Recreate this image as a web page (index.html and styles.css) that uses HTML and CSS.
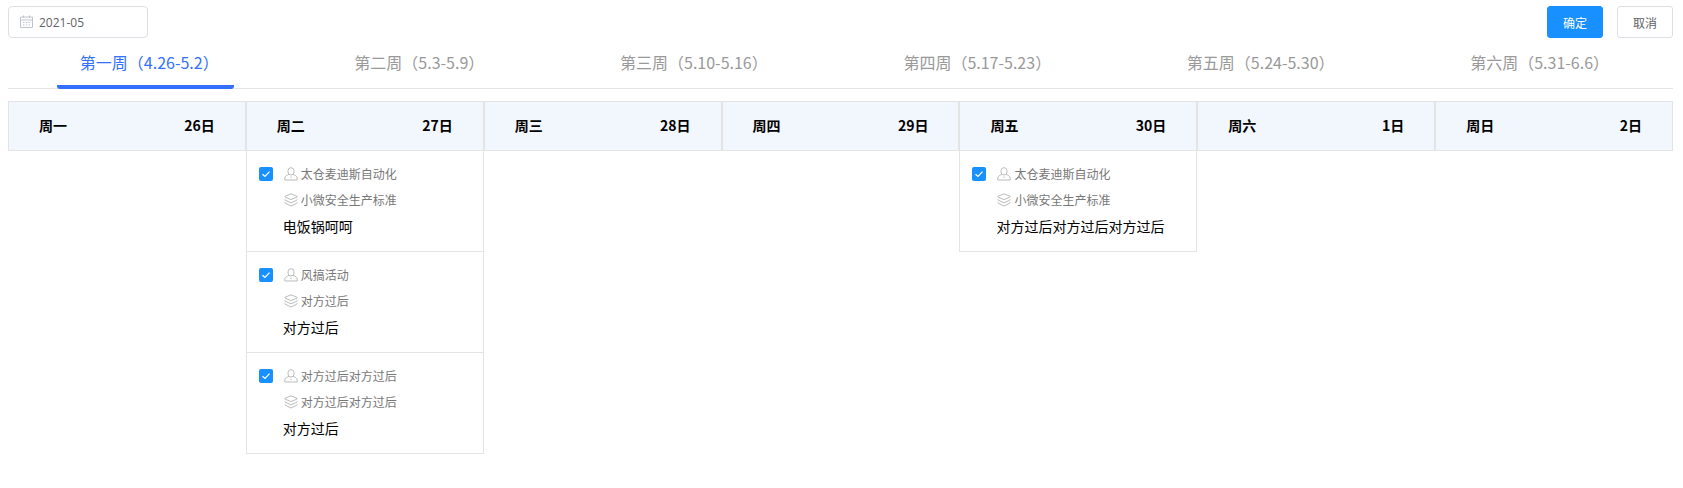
FILE: index.html
```html
<!DOCTYPE html>
<html lang="zh-CN">
<head>
    <meta charset="UTF-8">
    <title>周计划</title>
    <link rel="stylesheet" href="styles.css">
</head>
<body>
    <svg class="icon-defs" width="0" height="0">
        <symbol id="icon-user" viewBox="0 0 14 14">
            <path d="M7 .7a3 3 0 0 1 3 3v1.300a3 3 0 0 1-6 0V3.700a3 3 0 0 1 3-3zM5 7.400C3 8.100.8 9.200.8 11v2h12.400v-2c0-1.800-2.200-2.900-4.200-3.600M7 9.500v1.500" fill="none" stroke="currentColor" stroke-width="1"/>
        </symbol>
        <symbol id="icon-layers" viewBox="0 0 14 14">
            <path d="M7 .8l6 2.500c.4.2.4.600 0 .8L7 6.600 1 4.100c-.4-.2-.4-.6 0-.8zM1.200 6.200c-.5.3-.5.7 0 1L7 9.800l5.800-2.600c.5-.3.5-.7 0-1M1.200 9.200c-.5.3-.5.7 0 1L7 13l5.800-2.800c.5-.3.5-.7 0-1" fill="none" stroke="currentColor" stroke-width="1" stroke-linejoin="round"/>
        </symbol>
    </svg>

    <div class="toolbar">
        <div class="date-box">
            <svg class="date-icon" viewBox="0 0 13 13" width="13" height="13">
                <path d="M.5 2h12v10.500H.5zM.5 5h12M3.500.5V3M9.500.5V3" fill="none" stroke="currentColor"/>
                <path d="M3 7h1.500v1H3zM5.800 7h1.500v1H5.800zM8.600 7h1.500v1H8.600zM3 9.500h1.500v1H3zM5.800 9.500h1.500v1H5.800zM8.600 9.500h1.500v1H8.600z" fill="currentColor"/>
            </svg>
            <span>2021-05</span>
        </div>
        <div class="actions">
            <button class="btn btn-primary">确定</button>
            <button class="btn">取消</button>
        </div>
    </div>

    <div class="tabs">
        <div class="tab active"><span class="tab-label">第一周（4.26-5.2）</span></div>
        <div class="tab"><span class="tab-label">第二周（5.3-5.9）</span></div>
        <div class="tab"><span class="tab-label">第三周（5.10-5.16）</span></div>
        <div class="tab"><span class="tab-label">第四周（5.17-5.23）</span></div>
        <div class="tab"><span class="tab-label">第五周（5.24-5.30）</span></div>
        <div class="tab"><span class="tab-label">第六周（5.31-6.6）</span></div>
    </div>

    <div class="week">
        <div class="day-head"><span>周一</span><span>26日</span></div>
        <div class="day-head"><span>周二</span><span>27日</span></div>
        <div class="day-head"><span>周三</span><span>28日</span></div>
        <div class="day-head"><span>周四</span><span>29日</span></div>
        <div class="day-head"><span>周五</span><span>30日</span></div>
        <div class="day-head"><span>周六</span><span>1日</span></div>
        <div class="day-head"><span>周日</span><span>2日</span></div>

        <div class="day"></div>
        <div class="day">
            <div class="card">
                <div class="row">
                    <span class="check"><svg viewBox="0 0 14 14"><path d="M3.500 7.200l2.500 2.300 4.500-4.800" fill="none" stroke="#fff" stroke-width="1.200"/></svg></span>
                    <svg class="row-icon"><use href="#icon-user"/></svg>
                    <span class="row-text">太仓麦迪斯自动化</span>
                </div>
                <div class="row row-sub">
                    <svg class="row-icon"><use href="#icon-layers"/></svg>
                    <span class="row-text">小微安全生产标准</span>
                </div>
                <div class="title">电饭锅呵呵</div>
            </div>
            <div class="card">
                <div class="row">
                    <span class="check"><svg viewBox="0 0 14 14"><path d="M3.500 7.200l2.500 2.300 4.500-4.800" fill="none" stroke="#fff" stroke-width="1.200"/></svg></span>
                    <svg class="row-icon"><use href="#icon-user"/></svg>
                    <span class="row-text">风搞活动</span>
                </div>
                <div class="row row-sub">
                    <svg class="row-icon"><use href="#icon-layers"/></svg>
                    <span class="row-text">对方过后</span>
                </div>
                <div class="title">对方过后</div>
            </div>
            <div class="card">
                <div class="row">
                    <span class="check"><svg viewBox="0 0 14 14"><path d="M3.500 7.200l2.500 2.300 4.500-4.800" fill="none" stroke="#fff" stroke-width="1.200"/></svg></span>
                    <svg class="row-icon"><use href="#icon-user"/></svg>
                    <span class="row-text">对方过后对方过后</span>
                </div>
                <div class="row row-sub">
                    <svg class="row-icon"><use href="#icon-layers"/></svg>
                    <span class="row-text">对方过后对方过后</span>
                </div>
                <div class="title">对方过后</div>
            </div>
        </div>
        <div class="day"></div>
        <div class="day"></div>
        <div class="day">
            <div class="card">
                <div class="row">
                    <span class="check"><svg viewBox="0 0 14 14"><path d="M3.500 7.200l2.500 2.300 4.500-4.800" fill="none" stroke="#fff" stroke-width="1.200"/></svg></span>
                    <svg class="row-icon"><use href="#icon-user"/></svg>
                    <span class="row-text">太仓麦迪斯自动化</span>
                </div>
                <div class="row row-sub">
                    <svg class="row-icon"><use href="#icon-layers"/></svg>
                    <span class="row-text">小微安全生产标准</span>
                </div>
                <div class="title">对方过后对方过后对方过后</div>
            </div>
        </div>
        <div class="day"></div>
        <div class="day"></div>
    </div>
</body>
</html>
```

FILE: styles.css
```css
* {
    box-sizing: border-box;
}

html, body {
    height: 100%;
    overflow: hidden;
}

body {
    margin: 0;
    padding: 6px 10px 0 8px;
    font-family: "Noto Sans CJK SC", "Open Sans", sans-serif;
    font-size: 14px;
    color: #000;
    background-color: #fff;
}

.icon-defs {
    position: absolute;
}

.toolbar {
    display: flex;
    justify-content: space-between;
    align-items: flex-start;
}

.date-box {
    width: 140px;
    height: 32px;
    padding-left: 11px;
    display: flex;
    align-items: center;
    gap: 6px;
    border: 1px solid #dcdfe6;
    border-radius: 4px;
    font-family: "Open Sans", "Noto Sans CJK SC", sans-serif;
    font-size: 12px;
    color: #606266;
}

.date-icon {
    color: #c0c4cc;
    margin-top: -2px;
}

.actions {
    display: flex;
    gap: 14px;
}

.btn {
    width: 56px;
    height: 32px;
    padding: 0;
    font-family: inherit;
    font-size: 12px;
    color: #606266;
    background-color: #fff;
    border: 1px solid #dcdfe6;
    border-radius: 3px;
}

.btn-primary {
    color: #fff;
    background-color: #1890ff;
    border-color: #1890ff;
}

.tabs {
    display: flex;
    justify-content: space-around;
    height: 45px;
    margin-top: 6px;
    border-bottom: 1px solid #e4e4e4;
}

.tab {
    height: 45px;
    padding: 5px 24px 0;
    font-size: 16px;
    line-height: 26px;
    white-space: nowrap;
    color: #999;
}

/* the full-width brackets carry blank space, trim it so the ink is centred */
.tab-label {
    display: inline-block;
    margin: 0 -9px 0 -1px;
}

.tab.active {
    color: #3370ff;
    border-bottom: 4px solid #3370ff;
    border-radius: 0 0 3px 3px;
}

.week {
    display: grid;
    grid-template-columns: repeat(7, 1fr);
    margin-top: 12px;
}

.day-head {
    height: 50px;
    padding: 0 30px 2px 30px;
    display: flex;
    justify-content: space-between;
    align-items: center;
    font-weight: 700;
    font-size: 14px;
    background-color: #f2f6fd;
    border: 1px solid #e4e4e4;
}

.card {
    height: 101px;
    padding: 10px 0 0 12px;
    border: 1px solid #e4e4e4;
    border-top: none;
}

.row {
    height: 26px;
    display: flex;
    align-items: center;
    font-size: 12px;
    color: #777;
}

.row-sub {
    padding-left: 25px;
}

.check {
    width: 14px;
    height: 14px;
    margin-right: 11px;
    border-radius: 2px;
    background-color: #1890ff;
    display: block;
    margin-top: -1px;
}

.check svg {
    display: block;
}

.row-icon {
    width: 14px;
    height: 14px;
    margin-right: 3px;
    color: #bbb;
}

.row-text {
    line-height: 26px;
}

.title {
    padding-left: 24px;
    line-height: 26px;
    font-size: 14px;
}
```
